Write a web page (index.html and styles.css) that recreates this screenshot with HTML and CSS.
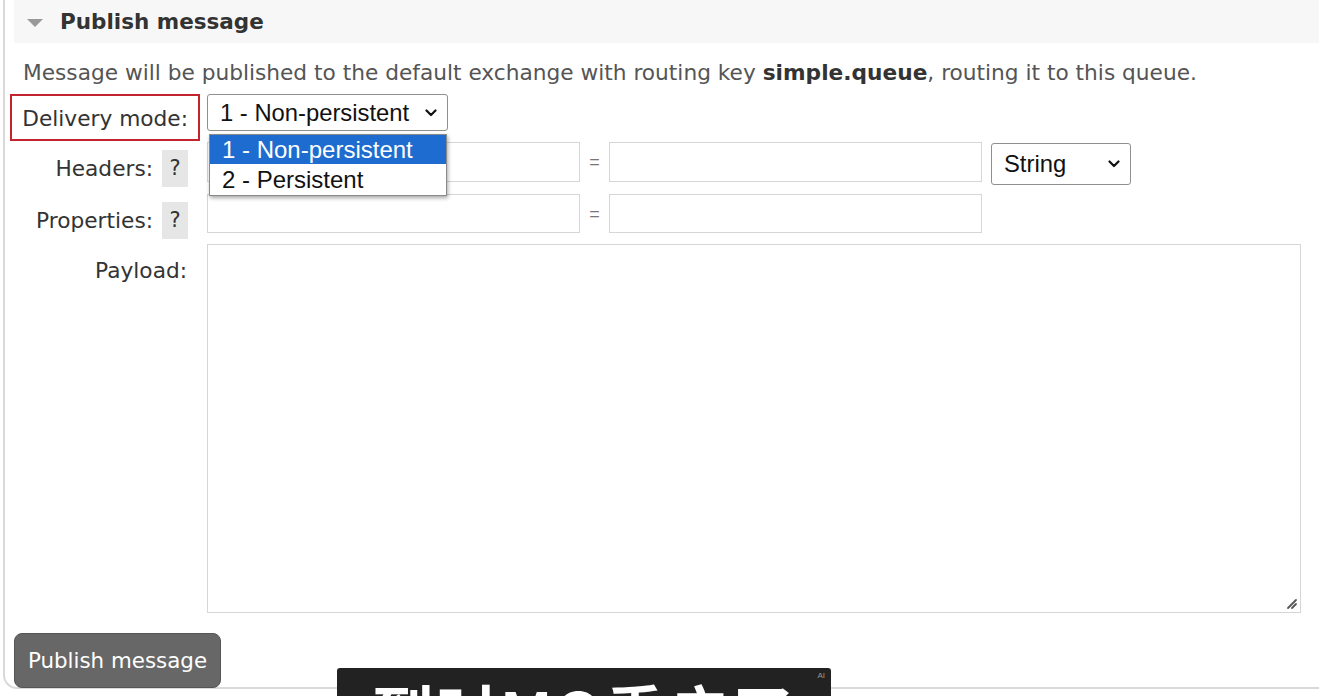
FILE: index.html
```html
<!DOCTYPE html>
<html>
<head>
<meta charset="utf-8">
<link rel="stylesheet" href="styles.css">
</head>
<body>
<div class="panel">
  <div class="section-head">
    <span class="tri"></span>
    <h2>Publish message</h2>
  </div>
  <p class="intro">Message will be published to the default exchange with routing key <b>simple.queue</b>, routing it to this queue.</p>

  <div class="row row-delivery">
    <div class="lab lab-delivery"><span class="mark">Delivery mode:</span></div>
    <div class="field">
      <div class="select sel-mode"><span>1 - Non-persistent</span><svg class="chev" viewBox="0 0 12 8"><path d="M1.5 1.5 L6 6 L10.5 1.5" fill="none" stroke="#111" stroke-width="2.2" stroke-linecap="round" stroke-linejoin="round"/></svg></div>
      <div class="dropdown">
        <div class="opt opt-sel">1 - Non-persistent</div>
        <div class="opt">2 - Persistent</div>
      </div>
    </div>
  </div>

  <div class="row row-headers">
    <div class="lab lab-help"><span class="ltext">Headers:</span><span class="help">?</span></div>
    <div class="field kv">
      <div class="input in-key"></div>
      <span class="eq">=</span>
      <div class="input in-val"></div>
      <div class="select sel-type"><span>String</span><svg class="chev" viewBox="0 0 12 8"><path d="M1.5 1.5 L6 6 L10.5 1.5" fill="none" stroke="#111" stroke-width="2.2" stroke-linecap="round" stroke-linejoin="round"/></svg></div>
    </div>
  </div>

  <div class="row row-props">
    <div class="lab lab-help"><span class="ltext">Properties:</span><span class="help">?</span></div>
    <div class="field kv">
      <div class="input in-key"></div>
      <span class="eq">=</span>
      <div class="input in-val"></div>
    </div>
  </div>

  <div class="row row-payload">
    <div class="lab lab-payload">Payload:</div>
    <div class="field">
      <div class="textarea"><svg class="grip" viewBox="0 0 14 14"><path d="M12 4 L4 12 M12 8 L8 12" stroke="#555" stroke-width="1.8" stroke-linecap="round"/></svg></div>
    </div>
  </div>

  <button class="publish">Publish message</button>
</div>

<div class="subtitle">
  <span class="ai">AI</span>
  <div class="sub-text">到时MQ重启了</div>
</div>
</body>
</html>
```

FILE: styles.css
```css
html, body {
  margin: 0;
  padding: 0;
  height: 100%;
  overflow: hidden;
  background: #fff;
}

body {
  font-family: "DejaVu Sans", Verdana, sans-serif;
  color: #333;
  position: relative;
}

.panel {
  margin-left: 3px;
  height: 689px;
  border-left: 2px solid #d9d9d9;
  border-bottom: 2px solid #d9d9d9;
  border-bottom-left-radius: 14px;
  box-sizing: border-box;
}

.section-head {
  margin-left: 9px;
  height: 43px;
  background: #f7f7f7;
  display: flex;
  align-items: center;
}

.tri {
  width: 0;
  height: 0;
  margin-left: 13px;
  margin-right: 17px;
  border-left: 8px solid transparent;
  border-right: 8px solid transparent;
  border-top: 8px solid #999;
  margin-top: 2px;
}

.section-head h2 {
  margin: 0;
  font-size: 21.5px;
  font-weight: bold;
  color: #333;
}

.intro {
  margin: 17px 0 0 18px;
  font-size: 21.7px;
  line-height: 26px;
  color: #555;
  white-space: nowrap;
}

.intro b {
  color: #333;
}

.row {
  display: flex;
  align-items: flex-start;
}

.lab {
  width: 195px;
  flex: none;
  box-sizing: border-box;
  font-size: 21.7px;
  color: #333;
  text-align: right;
  white-space: nowrap;
}

.field {
  margin-left: 7px;
  position: relative;
  display: flex;
  align-items: flex-start;
}

/* Delivery mode */
.row-delivery {
  margin-top: 8px;
  height: 48px;
}

.lab-delivery {
  display: flex;
  justify-content: flex-end;
}

.mark {
  display: block;
  width: 190px;
  height: 47px;
  box-sizing: border-box;
  border: 2px solid #c4242e;
  padding: 9px 10px 0 0;
  line-height: 28px;
}

.select {
  box-sizing: border-box;
  border: 1px solid #8f8f8f;
  border-radius: 3px;
  background: #fff;
  display: flex;
  align-items: center;
  justify-content: space-between;
  font-family: "Liberation Sans", Arial, sans-serif;
  font-size: 23.8px;
  color: #111;
}

.sel-mode {
  width: 241px;
  height: 37px;
  padding: 0 10px 0 12px;
}

.chev {
  width: 12px;
  height: 8px;
}

.dropdown {
  position: absolute;
  left: 2px;
  top: 40px;
  width: 238px;
  box-sizing: border-box;
  background: #fff;
  border: 1px solid #8a8a8a;
  box-shadow: 1px 2px 4px rgba(0,0,0,0.35);
  z-index: 5;
  font-family: "Liberation Sans", Arial, sans-serif;
  font-size: 24px;
  color: #111;
}

.opt {
  height: 31px;
  line-height: 31px;
  padding-left: 12px;
  white-space: nowrap;
}

.opt-sel {
  height: 29px;
  line-height: 29px;
  background: #1e6ccf;
  color: #fff;
}

/* Headers / properties */
.row-headers {
  height: 52px;
}

.row-props {
  height: 50px;
}

.lab-help {
  display: flex;
  justify-content: flex-end;
  align-items: center;
  padding-right: 12px;
  padding-top: 8px;
}

.ltext {
  margin-right: 9px;
  line-height: 37px;
}

.help {
  width: 26px;
  height: 37px;
  background: #e6e6e6;
  text-align: center;
  line-height: 37px;
  font-size: 21px;
  color: #333;
}

.input {
  box-sizing: border-box;
  height: 40px;
  width: 373px;
  border: 1px solid #d6d6d6;
  background: #fff;
}

.row-props .input {
  height: 39px;
}

.eq {
  width: 29px;
  text-align: center;
  font-family: "Liberation Sans", Arial, sans-serif;
  font-size: 18px;
  color: #777;
  line-height: 40px;
}

.sel-type {
  margin-left: 9px;
  margin-top: 1px;
  width: 140px;
  height: 42px;
  padding: 0 10px 0 12px;
}

/* Payload */
.row-payload {
  height: 369px;
}

.lab-payload {
  padding-right: 13px;
  padding-top: 13px;
  line-height: 28px;
}

.textarea {
  width: 1094px;
  height: 369px;
  box-sizing: border-box;
  border: 1px solid #d6d6d6;
  position: relative;
}

.grip {
  position: absolute;
  right: 2px;
  bottom: 2px;
  width: 14px;
  height: 14px;
}

.publish {
  display: block;
  margin: 20px 0 0 9px;
  width: 207px;
  height: 55px;
  border: 1px solid #555;
  border-radius: 8px;
  background: #676767;
  color: #fff;
  font-family: "DejaVu Sans", Verdana, sans-serif;
  font-size: 21.4px;
  padding: 0;
  white-space: nowrap;
}

/* Video subtitle overlay */
.subtitle {
  position: absolute;
  left: 337px;
  top: 668px;
  width: 494px;
  height: 80px;
  background: #222;
  border-radius: 3px;
  overflow: hidden;
}

.ai {
  position: absolute;
  right: 6px;
  top: 3px;
  font-family: "Liberation Sans", Arial, sans-serif;
  font-size: 8px;
  color: #999;
}

.sub-text {
  padding-top: 12px;
  text-align: center;
  font-family: "Noto Sans CJK SC", sans-serif;
  font-weight: bold;
  font-size: 62px;
  line-height: 62px;
  color: #fff;
  letter-spacing: 2px;
}
```
